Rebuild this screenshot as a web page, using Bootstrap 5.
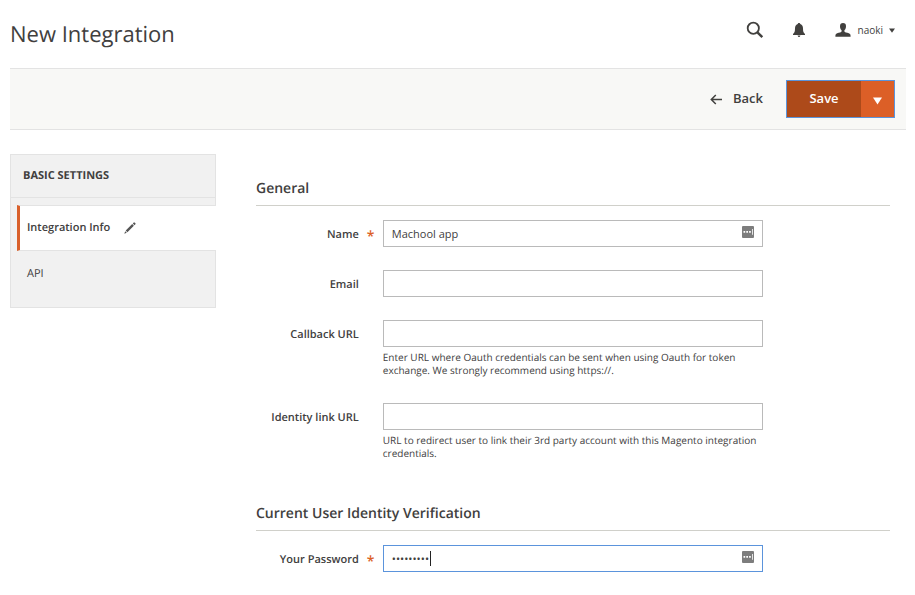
<!DOCTYPE html>
<html lang="en">
<head>
<meta charset="utf-8">
<meta name="viewport" content="width=device-width, initial-scale=1">
<title>New Integration</title>
<link href="https://cdn.jsdelivr.net/npm/bootstrap@5.3.0/dist/css/bootstrap.min.css" rel="stylesheet">
<style>
  body { font-family: "Open Sans", sans-serif; font-size: 11px; line-height: 20px; color: #41403e; background: #fff; text-rendering: geometricPrecision; }
  .page-shell { padding: 0 9px 20px 10px; }
  .page-head { height: 68px; padding-right: 11px; }
  .page-title { font-size: 22px; line-height: 30px; font-weight: 400; }
  .head-tools { gap: 28px; padding-bottom: 8px; }
  .head-tools .btn, .action-bar .btn { border-radius: 0; color: #41403e; }
  .user-btn { font-size: 10px; line-height: 18px; gap: 6px; }
  .action-bar { background: #f8f8f6; border: solid #e3e3e3; border-width: 1px 0; height: 62px; padding-right: 11px; gap: 23px; }
  .action-bar .back-btn { font-size: 13px; font-weight: 600; gap: 10px; }
  .save-group { border: 1px solid #5b94dc; height: 38px; }
  .action-bar .save-btn { width: 74px; background: #ad4a1a; color: #fff; font-size: 13px; font-weight: 600; }
  .action-bar .split-btn { width: 33px; background: #dc5f27; color: #fff; }
  .page-main { padding-top: 24px; gap: 40px; }
  .side-nav { width: 206px; background: #f1f1f1; border: 1px solid #e3e3e3; padding-bottom: 10px; }
  .side-title { font-size: 11px; line-height: 20px; font-weight: 700; padding: 11px 12px; border-bottom: 1px solid #e3e3e3; margin-bottom: 7px; }
  .side-link { color: #41403e; text-decoration: none; height: 46px; padding-left: 16px; gap: 14px; }
  .side-link.current { background: #fff; border: solid #e3e3e3; border-width: 1px 0; border-left: 3px solid #d9602b; margin: 0 -1px 0 6px; padding-left: 7px; font-weight: 600; }
  .form-area { padding: 24px 16px 0 0; min-width: 0; }
  .form-area fieldset { margin-bottom: 17px; }
  .form-area legend { font-size: 14px; line-height: 22px; font-weight: 600; padding-bottom: 5px; border-bottom: 1px solid #d0d0ca; margin-bottom: 14px; float: none; }
  .field-row { display: grid; grid-template-columns: 1fr 3fr 1fr; margin-bottom: 23px; }
  .field-label { text-align: right; font-weight: 600; line-height: 25px; padding: 2px 24px 0 0; white-space: nowrap; }
  .field-label.required { padding-right: 9px; }
  .field-label.required::after { content: "*"; color: #dc5f27; margin-left: 8px; display: inline-block; width: 7px; font-size: 14px; line-height: 20px; vertical-align: -3px; }
  .field-box .form-control { height: 27px; padding: 0 8px; border: 1px solid #bababa; border-radius: 0; font-size: 11px; line-height: 20px; color: #41403e; box-shadow: none; }
  .field-box .form-control.active-input { border-color: #5b94dc; caret-color: transparent; }
  .fill-icon { right: 9px; top: 6px; }
  .text-cursor { left: 47px; top: 6px; width: 1px; height: 15px; background: #222; }
  .help-text { font-size: 10px; line-height: 13px; margin: 4px 0 3px; }
</style>
</head>
<body>
<div class="page-shell">
  <header class="page-head d-flex align-items-center justify-content-between">
    <h1 class="page-title mb-0">New Integration</h1>
    <div class="head-tools d-flex align-items-center">
      <button class="btn p-0 border-0 d-flex" type="button" aria-label="Search">
        <svg width="18" height="18" viewBox="0 0 18 18" fill="none" stroke="currentColor"><circle cx="7.3" cy="7.2" r="5.6" stroke-width="1.8"/><path d="M11.4 11.3 16.3 16.2" stroke-width="2.4"/></svg>
      </button>
      <button class="btn p-0 border-0 d-flex" type="button" aria-label="Notifications">
        <svg width="14" height="16" viewBox="0 0 14 16" fill="currentColor"><path d="M7 1c.8 0 1.200.5 1.300 1.100C10.300 2.700 11 4.500 11 6.500c0 3 .5 4.300 2 5.500v1H1v-1c1.500-1.200 2-2.500 2-5.500 0-2 .7-3.800 2.700-4.400C5.800 1.500 6.200 1 7 1zM5.600 13.500h2.800C8.300 14.400 7.700 15 7 15s-1.300-.6-1.400-1.500z"/></svg>
      </button>
      <button class="user-btn btn p-0 border-0 d-flex align-items-center" type="button">
        <svg width="18" height="16" viewBox="0 0 18 16" fill="currentColor"><path d="M9 1c2 0 3 1.200 3 3.200 0 1.700-.6 3-1.400 3.900-.4.500-.3 1.600.2 1.900 1.200.6 3.900 1 5.200 2 .5.500.6 1.500.6 2.700H1.400c0-1.200.1-2.200.6-2.700 1.300-1 4-1.400 5.200-2 .5-.3.600-1.400.2-1.900C6.600 7.200 6 5.900 6 4.200 6 2.200 7 1 9 1z"/></svg>
        <span>naoki</span>
        <svg width="6" height="5" viewBox="0 0 6 5" fill="currentColor"><path d="M0 .5h6L3 4.700z"/></svg>
      </button>
    </div>
  </header>

  <div class="action-bar d-flex align-items-center justify-content-end">
    <button class="back-btn btn p-0 border-0 d-flex align-items-center" type="button">
      <svg width="13" height="11" viewBox="0 0 13 11" fill="none" stroke="currentColor" stroke-width="1.500"><path d="M12 5.500H1.500M5.800 1 1.300 5.500l4.500 4.500"/></svg>
      Back
    </button>
    <div class="save-group d-flex">
      <button class="save-btn btn p-0 border-0" type="button">Save</button>
      <button class="split-btn btn p-0 border-0" type="button" aria-label="More save options">
        <svg width="9" height="8" viewBox="0 0 9 8" fill="currentColor"><path d="M0 .5h9L4.500 7.500z"/></svg>
      </button>
    </div>
  </div>

  <main class="page-main d-flex align-items-start">
    <nav class="side-nav flex-shrink-0" aria-label="Integration sections">
      <h2 class="side-title">BASIC SETTINGS</h2>
      <a class="side-link current d-flex align-items-center" href="#info" aria-current="page">
        Integration Info
        <svg width="12" height="12" viewBox="0 0 12 12" fill="#555"><path d="M1.700 8.600 8.200 2.100l1.700 1.700-6.500 6.500zM8.800 1.500l.9-.9c.3-.3.700-.3 1 0l.7.7c.3.300.3.700 0 1l-.9.900zM1.200 9.200l1.600 1.600L.3 11.700z"/></svg>
      </a>
      <a class="side-link d-flex align-items-center" href="#api">API</a>
    </nav>

    <form class="form-area flex-grow-1" id="info">
      <fieldset>
        <legend>General</legend>
        <div class="field-row">
          <label class="field-label required" for="name">Name</label>
          <div class="field-box position-relative">
            <input class="form-control" id="name" type="text" value="Machool app">
            <svg class="fill-icon position-absolute" width="12" height="12" viewBox="0 0 12 12"><rect width="12" height="12" rx="1" fill="#7d7d7d"/><path d="M1.500 5h1.700v1.700H1.500zM4.300 5H6v1.700H4.300zM7.100 5h1.700v1.700H7.100zM10 3h.8v5.700H10z" fill="#fff"/></svg>
          </div>
        </div>
        <div class="field-row">
          <label class="field-label" for="email">Email</label>
          <div class="field-box"><input class="form-control" id="email" type="email"></div>
        </div>
        <div class="field-row">
          <label class="field-label" for="callback">Callback URL</label>
          <div class="field-box">
            <input class="form-control" id="callback" type="url" aria-describedby="callback-help">
            <p class="help-text" id="callback-help">Enter URL where Oauth credentials can be sent when using Oauth for token exchange. We strongly recommend using https://.</p>
          </div>
        </div>
        <div class="field-row">
          <label class="field-label" for="identity">Identity link URL</label>
          <div class="field-box">
            <input class="form-control" id="identity" type="url" aria-describedby="identity-help">
            <p class="help-text" id="identity-help">URL to redirect user to link their 3rd party account with this Magento integration credentials.</p>
          </div>
        </div>
      </fieldset>
      <fieldset class="mb-0">
        <legend>Current User Identity Verification</legend>
        <div class="field-row mb-0">
          <label class="field-label required" for="password">Your Password</label>
          <div class="field-box position-relative">
            <input class="form-control active-input" id="password" type="password" value="machool12">
            <span class="text-cursor position-absolute"></span>
            <svg class="fill-icon position-absolute" width="12" height="12" viewBox="0 0 12 12"><rect width="12" height="12" rx="1" fill="#7d7d7d"/><path d="M1.500 5h1.700v1.700H1.500zM4.300 5H6v1.700H4.300zM7.100 5h1.700v1.700H7.100zM10 3h.8v5.700H10z" fill="#fff"/></svg>
          </div>
        </div>
      </fieldset>
    </form>
  </main>
</div>
<script src="https://cdn.jsdelivr.net/npm/bootstrap@5.3.0/dist/js/bootstrap.bundle.min.js"></script>
</body>
</html>
